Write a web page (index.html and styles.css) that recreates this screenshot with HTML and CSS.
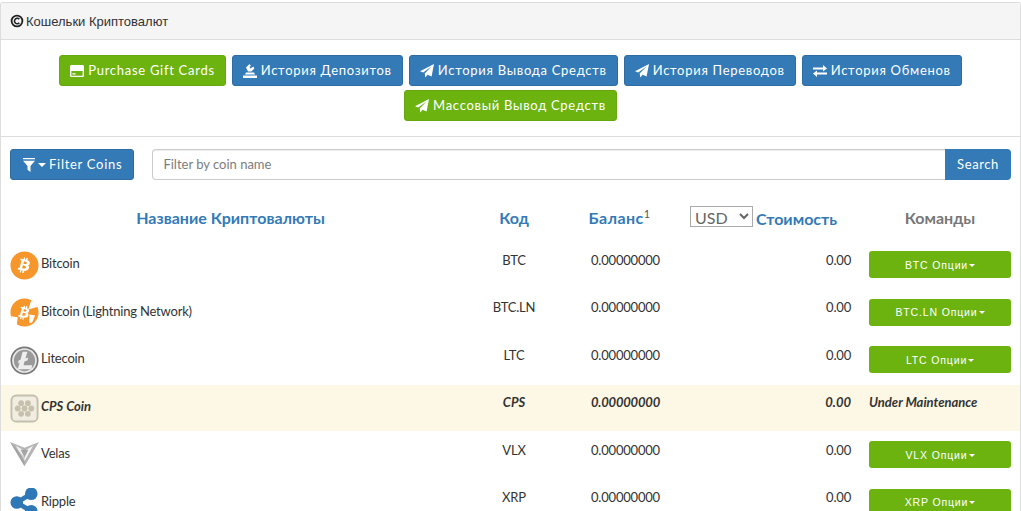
FILE: index.html
```html
<!DOCTYPE html>
<html lang="ru">
<head>
<meta charset="utf-8">
<title>Кошельки Криптовалют</title>
<link rel="stylesheet" href="styles.css">
</head>
<body>
<svg class="defs" width="0" height="0" aria-hidden="true">
  <defs>
    <symbol id="plane" viewBox="0 0 14 14"><path d="M14 0 11.600 12.400 7.600 10.700 5.300 13.600 4.700 9.400 11.500 2.600 3.200 8.600 0 7.200Z"/></symbol>
    <symbol id="bitcoin-b" viewBox="0 0 14 18"><path fill-rule="evenodd" d="M4.600 0h1.600l-.2 2.300h1.300L7.500 0h1.600l-.2 2.500c2.300.3 3.600 1.400 3.400 3.300-.1 1.200-.8 2-1.800 2.300 1.400.4 2.200 1.500 2 3-.3 2.400-2 3.300-4.300 3.500L7.600 17.500H6l.2-2.700H4.900l-.2 2.700H3.100l.2-2.700H0l.5-1.900c1.100.1 1.500 0 1.600-.6l.6-7.500c0-.5-.4-.7-1.600-.7l.2-1.800h3.100zM5.500 4.400 5.300 7.300c1.300 0 3.600.1 3.700-1.400.1-1.500-2.200-1.500-3.500-1.500zM5.100 9.100 4.900 12.500c1.600 0 4.100.1 4.200-1.600.1-1.800-2.400-1.800-4-1.800z"/></symbol>
  </defs>
</svg>
<main class="panel">
  <h1 class="panel-heading">
    <svg class="copy-icon" viewBox="0 0 14 14"><circle cx="7" cy="7" r="5.400" fill="none" stroke="#222" stroke-width="1.800"/><path d="M9.300 5.300A2.700 2.700 0 1 0 9.300 8.700" fill="none" stroke="#222" stroke-width="1.600"/></svg>
    <span>Кошельки Криптовалют</span>
  </h1>
  <nav class="actions">
    <a class="btn green"><svg class="ico" viewBox="0 0 15 13"><path fill-rule="evenodd" d="M1.500 0h12A1.500 1.500 0 0 1 15 1.500v10a1.500 1.500 0 0 1-1.500 1.500h-12A1.500 1.500 0 0 1 0 11.500v-10A1.500 1.500 0 0 1 1.500 0zM1.500 6.500v5h12v-5zM2.500 9h3.500v1.300H2.500z"/></svg>Purchase Gift Cards</a>
    <a class="btn blue"><svg class="ico" viewBox="0 0 14 14"><path d="M0 11.500h14V14H0zM2 10.500l1-2h8l1 2zM5 7.500 3 3.500 6.500 0 8 2 6.500 2.800l1 1.700L10.500 2.500l.8 2L8.500 7.500z"/></svg>История Депозитов</a>
    <a class="btn blue"><svg class="ico"><use href="#plane"/></svg>История Вывода Средств</a>
    <a class="btn blue"><svg class="ico"><use href="#plane"/></svg>История Переводов</a>
    <a class="btn blue"><svg class="ico" viewBox="0 0 14 12"><path d="M0 2.500h10V0l4 3.500L10 6.500V4.500H0zM14 7.500H4V5.500L0 8.500l4 3.500V9.500h10z"/></svg>История Обменов</a>
    <a class="btn green"><svg class="ico"><use href="#plane"/></svg>Массовый Вывод Средств</a>
  </nav>
  <section class="filter-bar">
    <a class="btn blue filter-btn"><svg class="ico funnel" viewBox="0 0 12 14"><path d="M0 0h12v1.300H0zM0 2.800h12L7.500 8v6l-3-2.200V8z"/></svg><i class="caret"></i> Filter Coins</a>
    <div class="search">
      <input class="search-input" type="text" placeholder="Filter by coin name">
      <a class="search-btn">Search</a>
    </div>
  </section>
  <table class="coins">
    <colgroup><col class="c-name"><col class="c-code"><col class="c-bal"><col class="c-val"><col class="c-cmd"></colgroup>
    <thead>
      <tr>
        <th class="link">Название Криптовалюты</th>
        <th class="link">Код</th>
        <th class="link bal-head">Баланс<sup>1</sup></th>
        <th class="val-head"><select class="cur"><option>USD</option></select><span class="link val-title">Стоимость</span></th>
        <th class="muted">Команды</th>
      </tr>
    </thead>
    <tbody>
      <tr>
        <td class="name"><div class="coin"><svg class="coin-ico" viewBox="0 0 30 30"><circle cx="15" cy="15" r="14.500" fill="#f6962b"/><use href="#bitcoin-b" x="8.500" y="6.500" width="13" height="17" fill="#fff" transform="rotate(12 15 15)"/></svg><span>Bitcoin</span></div></td>
        <td class="code">BTC</td><td class="bal">0.00000000</td><td class="val">0.00</td>
        <td class="cmd"><a class="opt">BTC Опции<i class="caret small"></i></a></td>
      </tr>
      <tr>
        <td class="name"><div class="coin"><svg class="coin-ico" viewBox="0 0 30 30"><circle cx="15" cy="15" r="14.500" fill="#f6962b"/><path d="M22 2 19 12 29 9 26 5zM1 19l7 1-1 8-4-3zM20 17l6 1-3 7-3 1z" fill="#fff"/><use href="#bitcoin-b" x="9" y="8" width="12" height="15" fill="#fff" transform="rotate(12 15 15)"/></svg><span>Bitcoin (Lightning Network)</span></div></td>
        <td class="code">BTC.LN</td><td class="bal">0.00000000</td><td class="val">0.00</td>
        <td class="cmd"><a class="opt">BTC.LN Опции<i class="caret small"></i></a></td>
      </tr>
      <tr>
        <td class="name"><div class="coin"><svg class="coin-ico" viewBox="0 0 30 30"><circle cx="15" cy="15" r="14.500" fill="#777"/><circle cx="15" cy="15" r="12.800" fill="#e8e8e8"/><circle cx="15" cy="15" r="11" fill="#9a9a9a"/><path d="M13 6h5l-2 7 3-1-1 3-3 1-1 4h9l-1 4H8l2-7-2 1 1-3 2-1z" fill="#eee"/></svg><span>Litecoin</span></div></td>
        <td class="code">LTC</td><td class="bal">0.00000000</td><td class="val">0.00</td>
        <td class="cmd"><a class="opt">LTC Опции<i class="caret small"></i></a></td>
      </tr>
      <tr class="warn">
        <td class="name"><div class="coin"><svg class="coin-ico" viewBox="0 0 30 30"><rect x="1.500" y="1.500" width="27" height="27" rx="5" fill="#f1ede2" stroke="#c4c0ae" stroke-width="2"/><g fill="#c6c1ad"><circle cx="11.500" cy="9.500" r="3"/><circle cx="18.500" cy="9.500" r="3"/><circle cx="8" cy="15" r="3"/><circle cx="15" cy="15" r="3"/><circle cx="22" cy="15" r="3"/><circle cx="11.500" cy="20.500" r="3"/><circle cx="18.500" cy="20.500" r="3"/></g></svg><span>CPS Coin</span></div></td>
        <td class="code">CPS</td><td class="bal">0.00000000</td><td class="val">0.00</td>
        <td class="cmd note">Under Maintenance</td>
      </tr>
      <tr>
        <td class="name"><div class="coin"><svg class="coin-ico" viewBox="0 0 30 30"><path d="M0 1 15 7 30 1 15 26z" fill="#b5b5b5"/><path d="M6 5 15 10 24 5 15 21z" fill="#f2f2f2"/><path d="M11 9h8l-4 8z" fill="#a5a5a5"/><path d="M15 26 0 1 15 17z" fill="#8f8f8f" opacity=".45"/></svg><span>Velas</span></div></td>
        <td class="code">VLX</td><td class="bal">0.00000000</td><td class="val">0.00</td>
        <td class="cmd"><a class="opt">VLX Опции<i class="caret small"></i></a></td>
      </tr>
      <tr>
        <td class="name"><div class="coin"><svg class="coin-ico" viewBox="0 0 30 30"><g fill="#2f78b7"><circle cx="7" cy="15" r="6.500"/><circle cx="22" cy="6" r="6.500"/><circle cx="22" cy="24" r="6.500"/></g><path d="M7 15 22 6M7 15 22 24" stroke="#2f78b7" stroke-width="5"/></svg><span>Ripple</span></div></td>
        <td class="code">XRP</td><td class="bal">0.00000000</td><td class="val">0.00</td>
        <td class="cmd"><a class="opt">XRP Опции<i class="caret small"></i></a></td>
      </tr>
    </tbody>
  </table>
</main>
</body>
</html>
```

FILE: styles.css
```css
* { box-sizing: border-box; }
html, body { height: 511px; overflow: hidden; }
body { margin: 0; background: #fff; color: #333; font: 13px/1.43 Lato, "Liberation Sans", sans-serif; padding-top: 2px; }
.defs { position: absolute; }
.panel { border: 1px solid #ddd; border-bottom: 0; border-radius: 3px 3px 0 0; }
.panel-heading { display: flex; align-items: center; gap: 2px; height: 37px; margin: 0; padding: 0 9px; background: #f5f5f5; border-bottom: 1px solid #ddd; font: 400 13px/1 "Liberation Sans", sans-serif; color: #333; }
.copy-icon { width: 14px; height: 14px; }
.actions { display: flex; flex-wrap: wrap; justify-content: center; column-gap: 6px; row-gap: 4px; padding: 15px 0 15px; border-bottom: 1px solid #ddd; }
.btn { display: inline-flex; align-items: center; height: 31px; padding: 0 10px; border-radius: 3px; color: #fff; font-size: 13px; letter-spacing: .72px; white-space: nowrap; }
.blue { background: #337ab7; border: 1px solid #2e6da4; }
.green { background: #6cb30f; border: 1px solid #66a80e; }
.ico { width: 14px; height: 14px; margin-right: 4px; fill: currentColor; flex: none; }
.filter-bar { display: flex; gap: 18px; padding: 12px 9px 0; }
.filter-btn { padding: 0 11px 0 12px; }
.funnel { width: 12px; margin-right: 3px; }
.caret { display: inline-block; width: 0; height: 0; border: 4px solid transparent; border-top-color: currentColor; border-bottom: 0; margin-right: 3px; }
.caret.small { border-width: 3px; border-bottom: 0; margin: 0 0 0 1px; vertical-align: middle; }
.search { flex: 1; display: flex; height: 31px; }
.search-input { flex: 1; min-width: 0; height: 31px; padding: 0 10px 1px; border: 1px solid #ccc; border-right: 0; border-radius: 4px 0 0 4px; box-shadow: inset 0 1px 1px rgba(0,0,0,.075); font: 13px Lato, sans-serif; color: #555; }
.search-input::placeholder { color: #7c7c7c; opacity: 1; }
.search-btn { width: 66px; display: flex; align-items: center; justify-content: center; background: #337ab7; color: #fff; border-radius: 0 4px 4px 0; font-size: 13px; letter-spacing: .6px; }
.coins { width: 100%; border-collapse: collapse; table-layout: fixed; }
.c-name { width: 459px; }
.c-code { width: 108px; }
.c-bal { width: 112px; }
.c-val { width: 180px; }
th { height: 62px; padding: 15px 0 0; text-align: center; font-size: 16px; font-weight: 700; color: #777; white-space: nowrap; }
.link { color: #337ab7; }
sup { font-size: 11px; font-weight: 400; line-height: 0; color: #555; }
.val-head { text-align: left; padding-left: 10px; }
.val-title { margin-left: 3px; }
.cur { width: 63px; height: 21px; padding: 0; border: 1px solid #aaa; background: #fff; font: 16px Lato, sans-serif; color: #666; border-radius: 0; vertical-align: 1px; }
.bal-head { padding-right: 9px; letter-spacing: .4px; }
tbody tr { height: 47.500px; }
td { padding: 0; vertical-align: middle; letter-spacing: -.2px; }
.name { padding-bottom: 1.500px; }
.coin { display: flex; align-items: center; gap: 2px; padding-left: 9px; }
.coin span { padding-bottom: 3px; }
.coin-ico { width: 29px; height: 29px; flex: none; }
.code { text-align: center; padding-bottom: 11px; }
.bal { text-align: center; padding: 0 0 11px 3px; }
.val { text-align: right; padding: 0 9px 11px 0; }
.cmd { padding: 0 9px 2.500px 9px; }
.opt { display: flex; justify-content: center; align-items: center; height: 27px; padding-top: 1px; background: #6cb30f; border-radius: 3px; color: #fff; font-size: 10.500px; letter-spacing: .85px; white-space: nowrap; font-family: "Liberation Sans", sans-serif; }
.warn td { background: linear-gradient(#fdf7e5, #fdf7e5) no-repeat 0 0 / 100% 46px; font-style: italic; font-weight: 700; letter-spacing: 0; padding-bottom: 12px; }
.warn .name { padding-bottom: 0; }
.warn .coin span { padding-bottom: 4px; }
.warn .bal { letter-spacing: -.2px; }
```
